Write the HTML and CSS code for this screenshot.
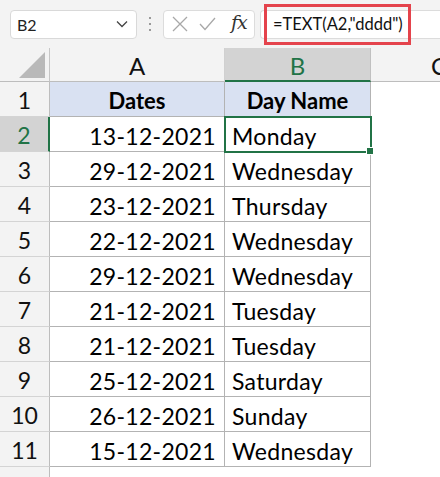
FILE: index.html
```html
<!DOCTYPE html>
<html>
<head>
<meta charset="utf-8">
<link rel="stylesheet" href="styles.css">
</head>
<body>
<div class="app">
  <div class="toolbar">
    <div class="namebox">
      <span class="namebox-text">B2</span>
      <svg class="chevron" width="12" height="8" viewBox="0 0 12 8"><path d="M1 1.5 L6 6.5 L11 1.5" fill="none" stroke="#444" stroke-width="1.3"/></svg>
    </div>
    <div class="dots"><i></i><i></i><i></i></div>
    <div class="fnbox">
      <svg class="ico-x" width="16" height="16" viewBox="0 0 16 16"><path d="M1 1 L15 15 M15 1 L1 15" stroke="#a8a8a8" stroke-width="1.3" fill="none"/></svg>
      <svg class="ico-check" width="17" height="14" viewBox="0 0 17 14"><path d="M1 7 L6 12.5 L16 1" stroke="#a8a8a8" stroke-width="1.3" fill="none"/></svg>
      <span class="fx">fx</span>
    </div>
    <div class="formula">
      <span class="formula-text">=TEXT(A2,"dddd")</span>
      <span class="highlight"></span>
    </div>
  </div>
  <div class="sheet">
    <div class="corner"><span class="tri"></span></div>
    <div class="colhead">A</div>
    <div class="colhead sel">B</div>
    <div class="colhead c">C</div>

    <div class="rowhead">1</div>
    <div class="cell hdr">Dates</div>
    <div class="cell hdr">Day Name</div>
    <div class="blank"></div>

    <div class="rowhead sel">2</div>
    <div class="cell date">13-12-2021</div>
    <div class="cell day active">Monday</div>
    <div class="blank"></div>

    <div class="rowhead">3</div>
    <div class="cell date">29-12-2021</div>
    <div class="cell day">Wednesday</div>
    <div class="blank"></div>

    <div class="rowhead">4</div>
    <div class="cell date">23-12-2021</div>
    <div class="cell day">Thursday</div>
    <div class="blank"></div>

    <div class="rowhead">5</div>
    <div class="cell date">22-12-2021</div>
    <div class="cell day">Wednesday</div>
    <div class="blank"></div>

    <div class="rowhead">6</div>
    <div class="cell date">29-12-2021</div>
    <div class="cell day">Wednesday</div>
    <div class="blank"></div>

    <div class="rowhead">7</div>
    <div class="cell date">21-12-2021</div>
    <div class="cell day">Tuesday</div>
    <div class="blank"></div>

    <div class="rowhead">8</div>
    <div class="cell date">21-12-2021</div>
    <div class="cell day">Tuesday</div>
    <div class="blank"></div>

    <div class="rowhead">9</div>
    <div class="cell date">25-12-2021</div>
    <div class="cell day">Saturday</div>
    <div class="blank"></div>

    <div class="rowhead">10</div>
    <div class="cell date">26-12-2021</div>
    <div class="cell day">Sunday</div>
    <div class="blank"></div>

    <div class="rowhead">11</div>
    <div class="cell date">15-12-2021</div>
    <div class="cell day">Wednesday</div>
    <div class="blank"></div>

    <div class="rowhead last"></div>
    <div class="blank"></div>
    <div class="blank"></div>
    <div class="blank"></div>
  </div>
</div>
</body>
</html>
```
FILE: styles.css
```css
* { box-sizing: border-box; }
html, body {
  margin: 0;
  padding: 0;
  background: #ffffff;
  overflow: hidden;
}
.app {
  width: 440px;
  height: 477px;
  overflow: hidden;
  font-family: Lato, "Open Sans", sans-serif;
  color: #000;
}
.toolbar {
  height: 48px;
  background: #f3f3f3;
  display: flex;
  align-items: center;
  padding-left: 10px;
}
.namebox {
  width: 127px;
  height: 29px;
  background: #fff;
  border: 1px solid #d9d9d9;
  border-radius: 4px;
  display: flex;
  align-items: center;
  justify-content: space-between;
  padding: 0 8px 0 6px;
}
.namebox-text {
  font-size: 16px;
  color: #222;
}
.chevron { display: block; }
.dots {
  width: 26px;
  display: flex;
  flex-direction: column;
  align-items: center;
  gap: 4px;
}
.dots i {
  display: block;
  width: 2px;
  height: 2px;
  background: #9a9a9a;
}
.fnbox {
  width: 92px;
  height: 29px;
  background: #fff;
  border: 1px solid #dcdcdc;
  border-radius: 4px;
  display: flex;
  align-items: center;
  padding-left: 8px;
}
.ico-x { display: block; }
.ico-check { display: block; margin-left: 11px; }
.fx {
  font-family: "DejaVu Serif", "Liberation Serif", serif;
  font-style: italic;
  font-size: 19px;
  color: #333;
  margin-left: 15px;
  letter-spacing: -1px;
  line-height: 1;
  margin-top: -3px;
}
.formula {
  position: relative;
  flex: 1;
  margin-left: 5px;
  height: 29px;
  background: #fff;
  border: 1px solid #dcdcdc;
  border-right: none;
  border-radius: 4px 0 0 4px;
  display: flex;
  align-items: center;
  padding-left: 12px;
}
.formula-text {
  font-size: 16.5px;
  color: #111;
}
.highlight {
  position: absolute;
  left: 3px;
  top: -7px;
  width: 147px;
  height: 41px;
  border: 3px solid #e4434c;
}
.sheet {
  display: grid;
  grid-template-columns: 50px 175px 146px 136px;
  grid-template-rows: 34px repeat(11, 35px) 12px;
}
.corner {
  background: #f3f3f3;
  border-right: 1px solid #c6c6c6;
  border-bottom: 1px solid #bdbdbd;
  position: relative;
}
.tri {
  position: absolute;
  right: 4px;
  bottom: 3px;
  width: 0;
  height: 0;
  border-left: 26px solid transparent;
  border-bottom: 26px solid #b9b9b9;
}
.colhead {
  background: #f3f3f3;
  border-right: 1px solid #d0d0d0;
  border-bottom: 1px solid #bdbdbd;
  display: flex;
  align-items: center;
  justify-content: center;
  font-size: 24px;
  color: #111;
  padding-top: 2px;
}
.colhead.sel {
  background: #d3d3d3;
  color: #217346;
  border-bottom: 2px solid #217346;
  border-right-color: #c0c0c0;
}
.colhead.c { border-right: none; }
.rowhead {
  background: #f3f3f3;
  border-right: 1px solid #bdbdbd;
  border-bottom: 1px solid #d4d4d4;
  display: flex;
  align-items: center;
  justify-content: center;
  font-size: 23px;
  color: #111;
  padding-top: 2px;
}
.rowhead.sel {
  background: #d3d3d3;
  color: #217346;
  border-right: 2px solid #217346;
}
.rowhead.last { border-bottom: none; }
.cell {
  border-right: 1px solid #b3b3b3;
  border-bottom: 1px solid #b3b3b3;
  display: flex;
  align-items: center;
  font-size: 23px;
  letter-spacing: 0.3px;
  white-space: nowrap;
  padding-top: 3px;
  position: relative;
}
.cell.hdr {
  background: #d9e1f2;
  font-weight: bold;
  justify-content: center;
  letter-spacing: 0;
  font-size: 22px;
}
.cell.date {
  justify-content: flex-end;
  padding-right: 8px;
}
.cell.day {
  padding-left: 7px;
}
.cell.active {
  outline: 2px solid #217346;
  outline-offset: -1px;
  z-index: 1;
}
.cell.active::after {
  content: "";
  position: absolute;
  right: -4px;
  bottom: -4px;
  width: 6px;
  height: 6px;
  background: #217346;
  border: 1px solid #fff;
}
.blank { background: #fff; }
```
